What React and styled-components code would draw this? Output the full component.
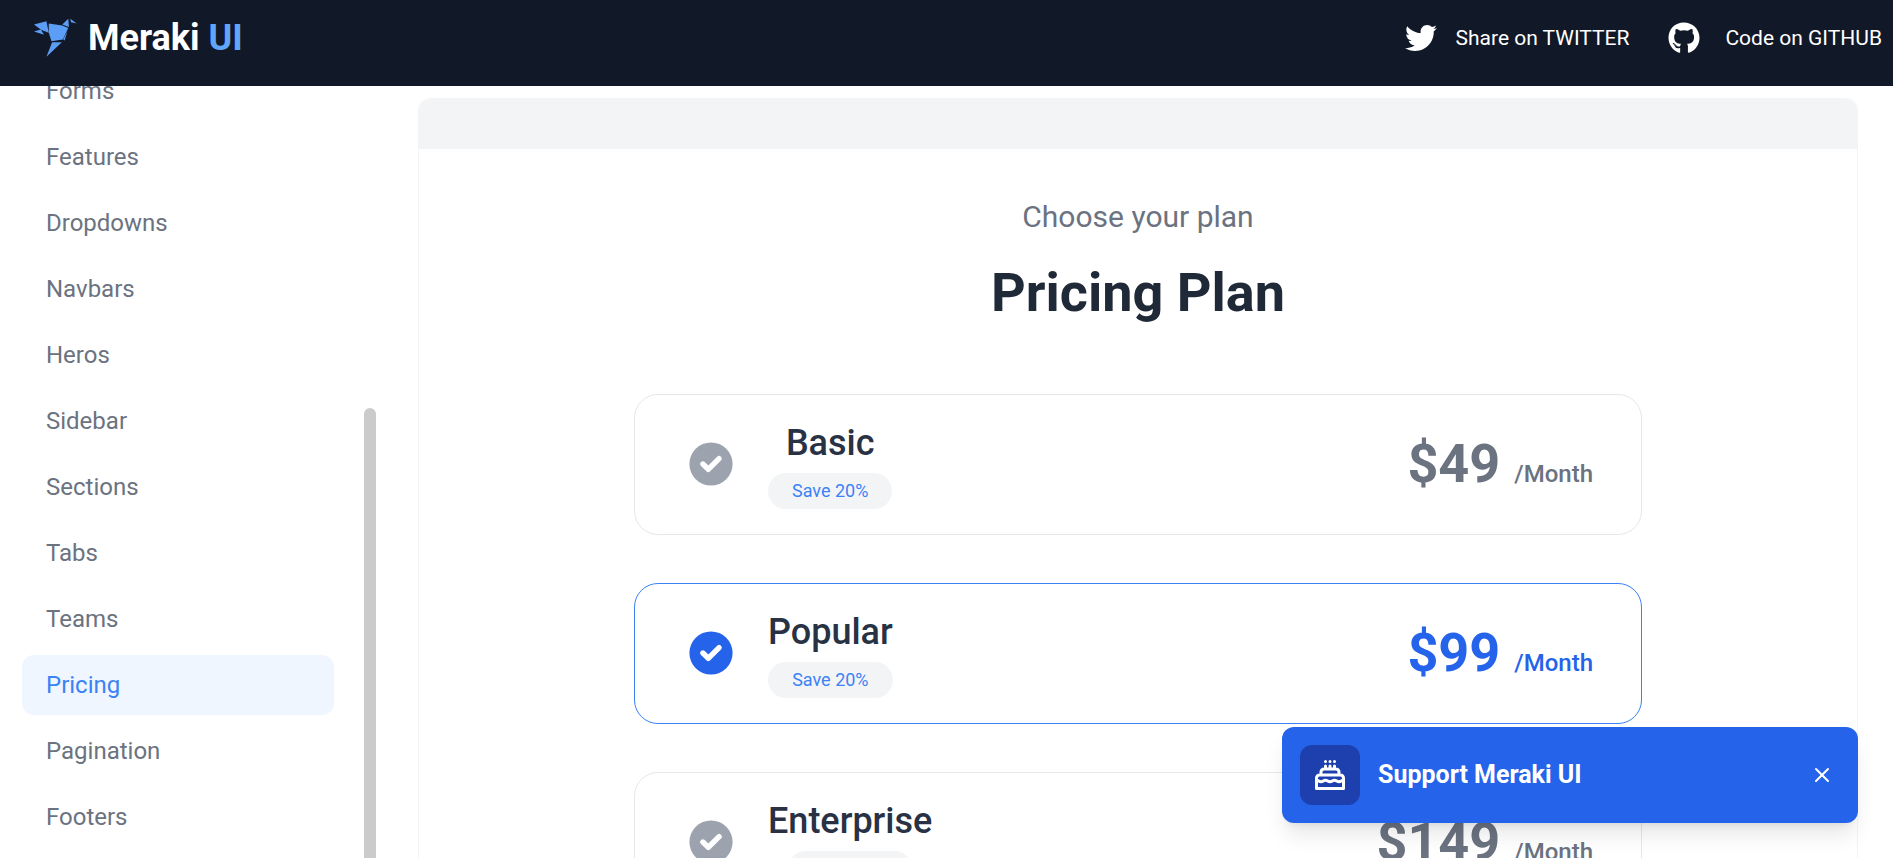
import React from "react";
import styled, { createGlobalStyle } from "styled-components";
import { X } from "lucide-react";
import { FaTwitter, FaGithub } from "react-icons/fa";

const Global = createGlobalStyle`
  html, body { margin: 0; height: 100%; overflow: hidden; background: #fff; }
  body { font-family: Roboto, "Noto Sans", sans-serif; }
  * { box-sizing: border-box; }
`;

const Page = styled.div`
  height: 858px;
  display: flex;
  flex-direction: column;
  position: relative;
  overflow: hidden;
`;

const Header = styled.header`
  height: 86px;
  flex: none;
  background: #111827;
  display: flex;
  align-items: center;
  justify-content: space-between;
  padding: 0 11px 11px 33px;
  position: relative;
  z-index: 2;
`;

const Brand = styled.div`
  display: flex;
  align-items: center;
  gap: 10px;
`;

const BrandName = styled.span`
  font-size: 36px;
  font-weight: 700;
  color: #fff;
  span { color: #60a5fa; }
`;

const HeaderLinks = styled.nav`
  display: flex;
  align-items: center;
  gap: 39px;
`;

const HeaderLink = styled.a`
  display: flex;
  align-items: center;
  gap: ${(p) => p.$gap}px;
  font-size: 21px;
  color: #fff;
`;

const Body = styled.div`
  flex: 1;
  display: flex;
  min-height: 0;
`;

const Sidebar = styled.aside`
  width: 418px;
  flex: none;
  position: relative;
  padding: 0 0 0 22px;
  margin-top: -25px;
`;

const NavList = styled.ul`
  list-style: none;
  margin: 0;
  padding: 0;
  width: 312px;
  display: flex;
  flex-direction: column;
  gap: 6px;
`;

const NavItem = styled.li`
  height: 60px;
  display: flex;
  align-items: center;
  padding-left: 24px;
  font-size: 24px;
  border-radius: 12px;
  color: ${(p) => (p.$active ? "#3b82f6" : "#6b7280")};
  background: ${(p) => (p.$active ? "#eff6ff" : "transparent")};
`;

const Thumb = styled.div`
  position: absolute;
  left: 364px;
  top: 347px;
  width: 12px;
  height: 520px;
  background: #cbcbcb;
  border-radius: 6px;
`;

const Main = styled.main`
  flex: none;
  width: 1440px;
  padding-top: 12px;
`;

const Panel = styled.section`
  border: 1px solid #f3f4f6;
  border-radius: 12px 12px 0 0;
  height: 900px;
  display: flex;
  flex-direction: column;
  align-items: center;
`;

const PanelBar = styled.div`
  width: 100%;
  height: 50px;
  background: #f3f4f6;
  border-radius: 12px 12px 0 0;
  flex: none;
`;

const Kicker = styled.p`
  margin: 48px 0 0;
  font-size: 30px;
  line-height: 40px;
  color: #6b7280;
`;

const Title = styled.h1`
  margin: 20px 0 0;
  font-size: 54px;
  line-height: 72px;
  font-weight: 700;
  color: #1f2937;
`;

const Plans = styled.div`
  width: 1008px;
  margin-top: 65px;
  display: flex;
  flex-direction: column;
  gap: 48px;
`;

const Plan = styled.div`
  height: 141px;
  border: 1px solid ${(p) => (p.$active ? "#3b82f6" : "#e5e7eb")};
  border-radius: 24px;
  display: flex;
  align-items: center;
  justify-content: space-between;
  padding: 0 48px 0 49px;
`;

const PlanLeft = styled.div`
  display: flex;
  align-items: center;
  gap: 30px;
`;

const PlanInfo = styled.div`
  display: flex;
  flex-direction: column;
  align-items: center;
  gap: 8px;
`;

const PlanName = styled.h2`
  margin: 0;
  font-size: 36px;
  line-height: 44px;
  font-weight: 500;
  color: #283244;
`;

const Badge = styled.div`
  padding: 0 24px;
  height: 36px;
  display: flex;
  align-items: center;
  font-size: 18px;
  color: #3b82f6;
  background: #f3f4f6;
  border-radius: 18px;
`;

const Price = styled.div`
  display: flex;
  align-items: baseline;
  gap: 14px;
  padding-bottom: 2px;
  color: ${(p) => (p.$active ? "#2563eb" : "#6b7280")};
  font-size: 54px;
  font-weight: 700;
  span { font-size: 24px; font-weight: 500; }
`;

const CheckCircle = styled.svg`
  width: 54px;
  height: 54px;
  flex: none;
  margin-bottom: 2px;
  color: ${(p) => (p.$active ? "#2563eb" : "#9ca3af")};
`;

const Toast = styled.div`
  position: absolute;
  left: 1282px;
  top: 727px;
  width: 576px;
  height: 96px;
  background: #2563eb;
  border-radius: 12px;
  display: flex;
  align-items: center;
  padding: 0 24px 0 18px;
  box-shadow: 0 15px 22px -4px rgba(0,0,0,.1), 0 6px 9px -6px rgba(0,0,0,.1);
  z-index: 3;
  color: #fff;
`;

const ToastIcon = styled.div`
  width: 60px;
  height: 60px;
  background: #1e40af;
  border-radius: 12px;
  display: flex;
  align-items: center;
  justify-content: center;
  flex: none;
`;

const ToastText = styled.div`
  margin-left: 18px;
  padding-bottom: 2px;
  flex: 1;
  font-size: 25px;
  font-weight: 700;
`;

const Check = ({ active }) => (
  <CheckCircle $active={active} viewBox="0 0 20 20" fill="currentColor">
    <path fillRule="evenodd" clipRule="evenodd" d="M10 18a8 8 0 100-16 8 8 0 000 16zm3.707-9.293a1 1 0 00-1.414-1.414L9 10.586 7.707 9.293a1 1 0 00-1.414 1.414l2 2a1 1 0 001.414 0l4-4z" />
  </CheckCircle>
);

const Logo = () => (
  <svg width="45" height="39" viewBox="27 28 130 116" fill="#5c9df5">
    <polygon points="28,47 65,38 72,72 50,64" />
    <polygon points="28,68 48,62 58,78" />
    <polygon points="72,44 112,50 130,58 114,92 80,97 72,72" />
    <polygon points="112,47 130,30 132,55" />
    <polygon points="136,30 155,44 138,41" />
    <polygon points="82,100 111,100 65,143" />
    <polygon points="115,92 128,66 119,95" />
  </svg>
);

const Cake = () => (
  <svg width="36" height="36" viewBox="0 0 24 24" fill="none" stroke="#fff" strokeWidth="2" strokeLinecap="round" strokeLinejoin="round">
    <path d="M21 15.546c-.523 0-1.046.151-1.5.454a2.704 2.704 0 01-3 0 2.704 2.704 0 00-3 0 2.704 2.704 0 01-3 0 2.704 2.704 0 00-3 0 2.704 2.704 0 01-3 0 2.701 2.701 0 00-1.5-.454M9 6v2m3-2v2m3-2v2M9 3h.01M12 3h.01M15 3h.01M21 21v-7a2 2 0 00-2-2H5a2 2 0 00-2 2v7h18zm-3-9v-2a2 2 0 00-2-2H8a2 2 0 00-2 2v2h12z" />
  </svg>
);

const items = ["Forms","Features","Dropdowns","Navbars","Heros","Sidebar","Sections","Tabs","Teams","Pricing","Pagination","Footers"];
const plans = [
  { name: "Basic", price: "$49" },
  { name: "Popular", price: "$99", active: true },
  { name: "Enterprise", price: "$149" },
];

export default function App() {
  return (
    <Page>
      <Global />
      <Header>
        <Brand>
          <Logo />
          <BrandName>Meraki <span>UI</span></BrandName>
        </Brand>
        <HeaderLinks>
          <HeaderLink $gap={19}><FaTwitter size={32} />Share on TWITTER</HeaderLink>
          <HeaderLink $gap={25}><FaGithub size={32} />Code on GITHUB</HeaderLink>
        </HeaderLinks>
      </Header>
      <Body>
        <Sidebar>
          <NavList>
            {items.map((i) => <NavItem key={i} $active={i === "Pricing"}>{i}</NavItem>)}
          </NavList>
          <Thumb />
        </Sidebar>
        <Main>
          <Panel>
            <PanelBar />
            <Kicker>Choose your plan</Kicker>
            <Title>Pricing Plan</Title>
            <Plans>
              {plans.map((p) => (
                <Plan key={p.name} $active={p.active}>
                  <PlanLeft>
                    <Check active={p.active} />
                    <PlanInfo>
                      <PlanName>{p.name}</PlanName>
                      <Badge>Save 20%</Badge>
                    </PlanInfo>
                  </PlanLeft>
                  <Price $active={p.active}>{p.price}<span>/Month</span></Price>
                </Plan>
              ))}
            </Plans>
          </Panel>
        </Main>
      </Body>
      <Toast>
        <ToastIcon><Cake /></ToastIcon>
        <ToastText>Support Meraki UI</ToastText>
        <X size={24} strokeWidth={2} />
      </Toast>
    </Page>
  );
}
